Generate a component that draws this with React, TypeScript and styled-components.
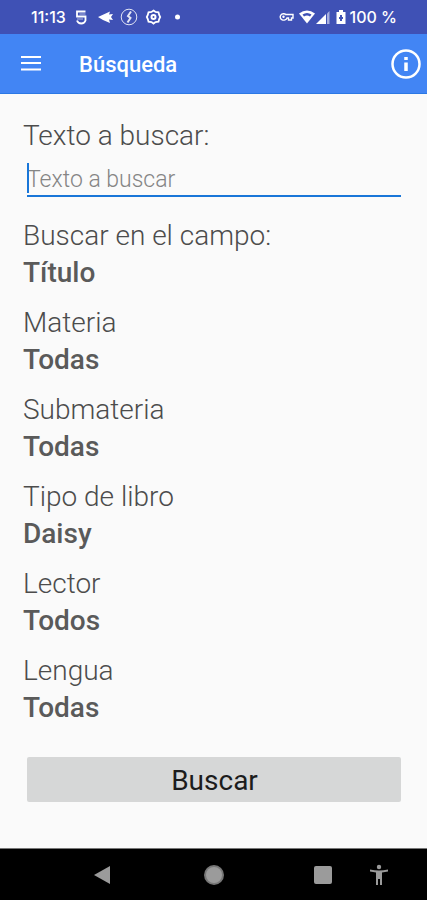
import React from "react";
import styled, { createGlobalStyle } from "styled-components";

const GlobalStyle = createGlobalStyle`
  *, *::before, *::after { box-sizing: border-box; }
  body { margin: 0; background: #fafafa; font-family: Roboto, "Liberation Sans", sans-serif; }
`;

const Screen = styled.div`
  min-height: 100vh;
  display: flex;
  flex-direction: column;
`;

const StatusBar = styled.div`
  display: flex;
  align-items: center;
  justify-content: space-between;
  height: 34px;
  padding: 0 30px 0 31px;
  background: #3f51b5;
  color: #fff;
  font: 500 16px/20px Inter, sans-serif;
`;

const StatusGroup = styled.div<{ $gap: number }>`
  display: flex;
  align-items: center;
  gap: ${(p) => p.$gap}px;
`;

const Glyph = styled.svg`
  display: block;
  flex: none;
`;

const AppBar = styled.header`
  display: flex;
  align-items: center;
  height: 60px;
  padding: 0 6px 0 19px;
  background: #4285f4;
  border-bottom: 1px solid #2b78e4;
  color: #fff;
`;

const Title = styled.h1`
  flex: 1;
  margin: 2px 0 0 36px;
  font-size: 22px;
  line-height: 28px;
  font-weight: 500;
`;

const IconButton = styled.button`
  display: block;
  padding: 0;
  border: 0;
  background: none;
  color: inherit;
`;

const Form = styled.form`
  flex: 1;
  display: flex;
  flex-direction: column;
  padding: 23px 23px 44px;
  color: #4c4c4c;
`;

const Field = styled.div`
  display: flex;
  flex-direction: column;
  margin-bottom: 13px;
`;

const Label = styled.label`
  font-size: 28px;
  line-height: 37px;
  font-weight: 300;
`;

const SearchBox = styled.div`
  position: relative;
  margin: 0 3px 7px 4px;
`;

const SearchInput = styled.input`
  display: block;
  width: 100%;
  height: 43px;
  padding: 9px 0 0;
  border: 0;
  border-bottom: 2px solid #1976d8;
  outline: 0;
  background: none;
  color: #4c4c4c;
  font: 300 23px/28px Roboto, sans-serif;
  caret-color: transparent;
  &::placeholder { color: #858585; opacity: 1; }
`;

const Caret = styled.span`
  position: absolute;
  left: 0;
  top: 9px;
  width: 2px;
  height: 30px;
  background: #1976d8;
`;

const Select = styled.select`
  appearance: none;
  height: 37px;
  padding: 0;
  border: 0;
  outline: 0;
  background: none;
  color: #5a5a5a;
  font: 500 28px/37px Roboto, sans-serif;
`;

const SubmitButton = styled.button`
  height: 45px;
  margin: 18px 3px 0 4px;
  padding: 2px 0 0 1px;
  border: 0;
  border-radius: 2px;
  background: #d6d7d7;
  color: #1c1c1c;
  font: 400 28px/37px Roboto, sans-serif;
`;

const NavBar = styled.nav`
  display: grid;
  grid-template-columns: 111fr 114fr 107fr 56fr 39fr;
  align-items: center;
  height: 52px;
  border-top: 1px solid #777;
  background: #000;
  color: #9b9b9b;
`;

const NavButton = styled(IconButton)`
  justify-self: end;
`;

const fields = [
  { id: "campo", label: "Buscar en el campo:", value: "Título" },
  { id: "materia", label: "Materia", value: "Todas" },
  { id: "submateria", label: "Submateria", value: "Todas" },
  { id: "tipo", label: "Tipo de libro", value: "Daisy" },
  { id: "lector", label: "Lector", value: "Todos" },
  { id: "lengua", label: "Lengua", value: "Todas" },
];

function Notifications() {
  return (
    <Glyph width="108" height="20" viewBox="0 0 108 20" fill="none" stroke="#fff">
      <path d="M12.500 4.500H4v5h8.500v4q-1 3-4.250 3T4 13.500" strokeWidth="1.800" />
      <path d="M6.500 7h6M4 12h6" strokeWidth="1" opacity="0.600" />
      <path d="M25 10 37 4.500l-1 3 4-.5-2 3 2 3-4-.5 1 3.500-7-3z" fill="#fff" stroke="none" />
      <g opacity="0.850">
        <circle cx="56" cy="10" r="7.800" strokeWidth="1" />
        <path d="m58 4.500-3 4.500 2.500 2-3 4.500" strokeWidth="2" />
      </g>
      <path d="m80.500 3.500 2 1.500 3 .3.700 2.700 1 2-1 2-.7 2.700-3 .3-2 1.500-2-1.500-3-.3-.7-2.700-1-2 1-2 .7-2.700 3-.3z" strokeWidth="1.800" />
      <circle cx="80.500" cy="10" r="2" strokeWidth="2" />
      <circle cx="104.500" cy="10" r="2.500" fill="#fff" stroke="none" />
    </Glyph>
  );
}

function SystemIcons() {
  return (
    <Glyph width="69" height="20" viewBox="0 0 69 20" fill="#fff">
      <path d="M6 7.500H14V11h-1.500v2H9.500v-2H8a3.500 3.200 0 1 1-1-3.500z" fill="none" stroke="#fff" strokeWidth="1.400" />
      <circle cx="4.500" cy="9.800" r="1.200" />
      <path d="M20 6.500q8-6 16 0l-8 10z" />
      <path d="M23.500 7.500q4.500-3 9 0l-1.500 2q-3-2-6 0z" fill="#3f51b5" />
      <path d="M37 17 47 7v10z" />
      <path d="M48 6.500 50.500 4v13H48z" opacity="0.550" />
      <path d="M60 3h4v2h2.500v12h-9V5H60z" />
      <path d="M61 8h2v2h1v2h-1v2h-2v-2h-1v-2h1z" fill="#3f51b5" />
    </Glyph>
  );
}

export default function App() {
  return (
    <>
      <GlobalStyle />
      <Screen>
        <StatusBar>
          <StatusGroup $gap={7}>
            <span>11:13</span>
            <Notifications />
          </StatusGroup>
          <StatusGroup $gap={2}>
            <SystemIcons />
            <span>100 %</span>
          </StatusGroup>
        </StatusBar>
        <AppBar>
          <IconButton type="button" aria-label="Menú">
            <Glyph width="24" height="24" viewBox="0 0 24 24" stroke="#fff" strokeWidth="2.200">
              <path d="M2 5h20M2 11h20M2 17.500h20" />
            </Glyph>
          </IconButton>
          <Title>Búsqueda</Title>
          <IconButton type="button" aria-label="Información">
            <Glyph width="30" height="30" viewBox="0 0 30 30" fill="none" stroke="#fff">
              <circle cx="15" cy="15" r="13.500" strokeWidth="2.500" />
              <path d="M15 13.500V22M15 8v3" strokeWidth="3.500" />
            </Glyph>
          </IconButton>
        </AppBar>
        <Form onSubmit={(e) => e.preventDefault()}>
          <Field>
            <Label htmlFor="texto">Texto a buscar:</Label>
            <SearchBox>
              <SearchInput id="texto" type="text" placeholder="Texto a buscar" />
              <Caret />
            </SearchBox>
          </Field>
          {fields.map((f) => (
            <Field key={f.id}>
              <Label htmlFor={f.id}>{f.label}</Label>
              <Select id={f.id} defaultValue={f.value}>
                <option>{f.value}</option>
              </Select>
            </Field>
          ))}
          <SubmitButton type="submit">Buscar</SubmitButton>
        </Form>
        <NavBar>
          <NavButton type="button" aria-label="Atrás">
            <Glyph width="18" height="20" viewBox="0 0 18 20" fill="currentColor">
              <path d="M1 10 17 1v18z" />
            </Glyph>
          </NavButton>
          <NavButton type="button" aria-label="Inicio">
            <Glyph width="22" height="22" viewBox="0 0 22 22">
              <circle cx="11" cy="11" r="10" fill="#777" />
              <circle cx="11" cy="11" r="8" fill="#9b9b9b" />
            </Glyph>
          </NavButton>
          <NavButton type="button" aria-label="Recientes">
            <Glyph width="18" height="18" viewBox="0 0 18 18" fill="currentColor">
              <rect width="18" height="18" rx="2" />
            </Glyph>
          </NavButton>
          <NavButton type="button" aria-label="Accesibilidad">
            <Glyph width="18" height="22" viewBox="0 0 18 22" fill="currentColor">
              <circle cx="9" cy="3" r="2.200" />
              <path d="M0 5.500q9 2 18 0v2q-3 .7-6 1V21h-2v-6H8v6H6V8.500q-3-.3-6-1z" />
            </Glyph>
          </NavButton>
        </NavBar>
      </Screen>
    </>
  );
}
